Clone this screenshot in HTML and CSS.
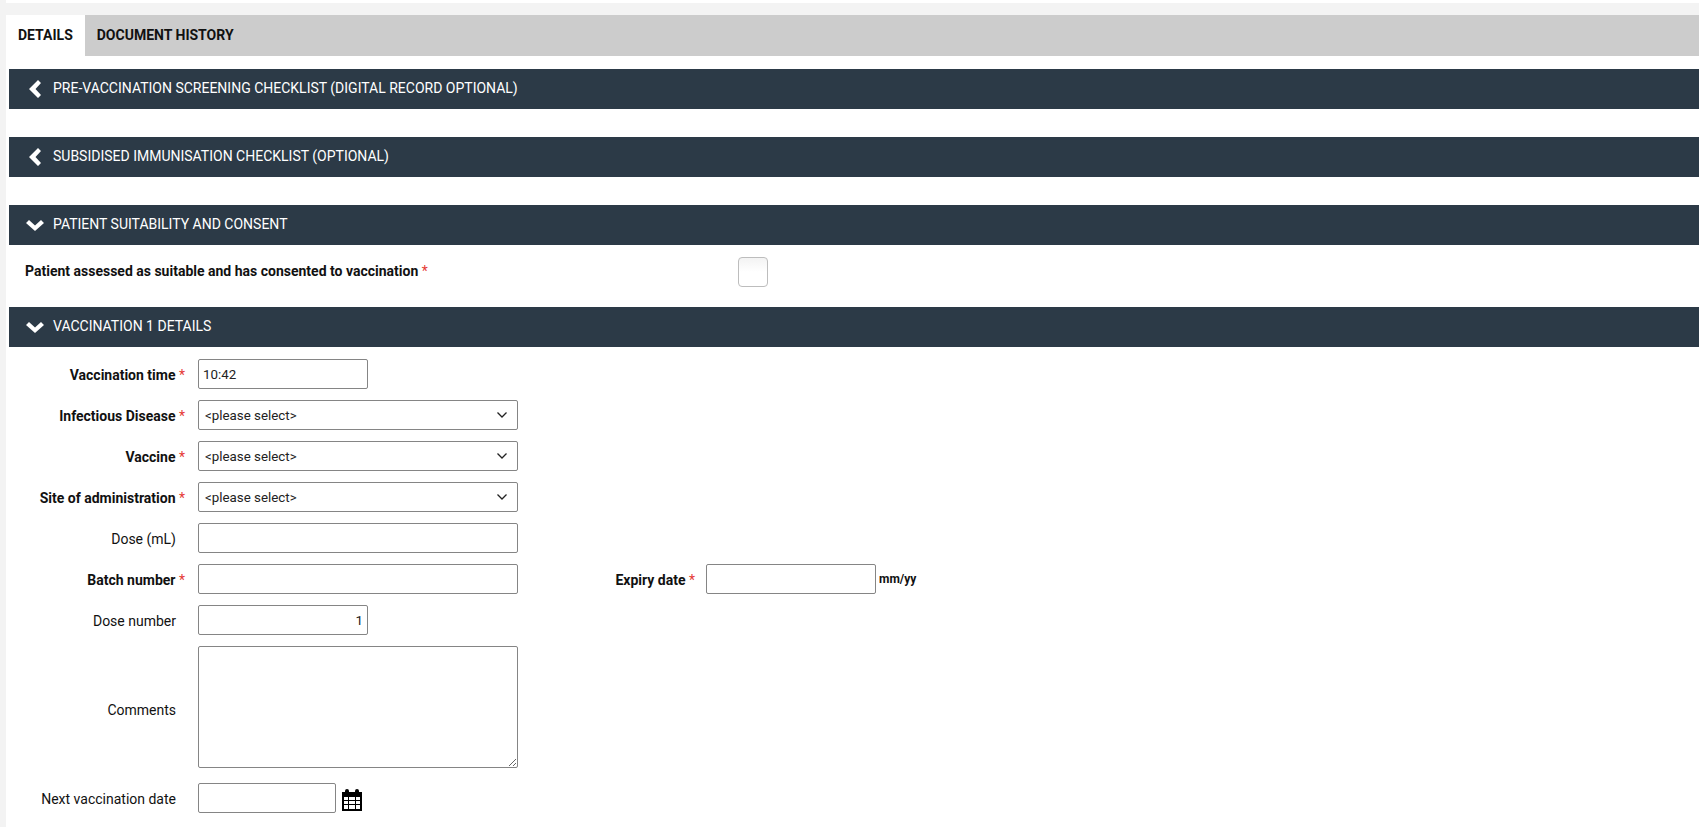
FILE: index.html
```html
<!DOCTYPE html>
<html lang="en">
<head>
<meta charset="utf-8">
<title>Vaccination record</title>
<link rel="stylesheet" href="styles.css">
</head>
<body>
<div class="page">
  <div class="top-strip"></div>
  <nav class="tabs">
    <a class="tab active">DETAILS</a>
    <a class="tab">DOCUMENT HISTORY</a>
  </nav>
  <main class="content">
    <section class="collapsed">
      <h2 class="bar"><span class="icon-slot"><svg class="chev-left" viewBox="0 0 12 18"><path d="M9 0 L12 3 L6.500 9 L12 15 L9 18 L0 9 Z"/></svg></span>PRE-VACCINATION SCREENING CHECKLIST (DIGITAL RECORD OPTIONAL)</h2>
    </section>
    <section class="collapsed">
      <h2 class="bar"><span class="icon-slot"><svg class="chev-left" viewBox="0 0 12 18"><path d="M9 0 L12 3 L6.500 9 L12 15 L9 18 L0 9 Z"/></svg></span>SUBSIDISED IMMUNISATION CHECKLIST (OPTIONAL)</h2>
    </section>
    <section>
      <h2 class="bar"><span class="icon-slot"><svg class="chev-down" viewBox="0 0 18 11"><path d="M3 0 L9 5.500 L15 0 L18 3 L9 11 L0 3 Z"/></svg></span>PATIENT SUITABILITY AND CONSENT</h2>
      <div class="consent">
        <span class="consent-label">Patient assessed as suitable and has consented to vaccination <span class="star">*</span></span>
        <span class="check"></span>
      </div>
    </section>
    <section>
      <h2 class="bar"><span class="icon-slot"><svg class="chev-down" viewBox="0 0 18 11"><path d="M3 0 L9 5.500 L15 0 L18 3 L9 11 L0 3 Z"/></svg></span>VACCINATION 1 DETAILS</h2>
      <div class="form">
        <div class="row">
          <label class="label req">Vaccination time <span class="star">*</span></label>
          <input class="field short" type="text" value="10:42">
        </div>
        <div class="row">
          <label class="label req">Infectious Disease <span class="star">*</span></label>
          <select class="field wide"><option>&lt;please select&gt;</option></select>
        </div>
        <div class="row">
          <label class="label req">Vaccine <span class="star">*</span></label>
          <select class="field wide"><option>&lt;please select&gt;</option></select>
        </div>
        <div class="row">
          <label class="label req">Site of administration <span class="star">*</span></label>
          <select class="field wide"><option>&lt;please select&gt;</option></select>
        </div>
        <div class="row">
          <label class="label">Dose (mL)</label>
          <input class="field wide" type="text">
        </div>
        <div class="row">
          <label class="label req">Batch number <span class="star">*</span></label>
          <input class="field wide" type="text">
          <label class="expiry-label">Expiry date <span class="star">*</span></label>
          <input class="field expiry" type="text">
          <span class="hint">mm/yy</span>
        </div>
        <div class="row">
          <label class="label">Dose number</label>
          <input class="field short num" type="text" value="1">
        </div>
        <div class="row">
          <label class="label">Comments</label>
          <textarea class="field wide notes"></textarea>
        </div>
        <div class="row">
          <label class="label">Next vaccination date</label>
          <input class="field date" type="text">
          <svg class="cal" viewBox="0 0 20 22">
            <path fill-rule="evenodd" d="M0 3H3V2Q3 0 5 0T7 2V3H13V2Q13 0 15 0T17 2V3H20V22H0ZM2 8V11H6V8ZM7 8V11H13V8ZM14 8V11H18V8ZM2 12V15H6V12ZM7 12V15H13V12ZM14 12V15H18V12ZM2 16V20H6V16ZM7 16V20H13V16ZM14 16V20H18V16Z"/>
          </svg>
        </div>
      </div>
    </section>
  </main>
</div>
</body>
</html>
```

FILE: styles.css
```css
html, body {
  margin: 0;
  height: 100%;
  overflow: hidden;
}
body {
  background: #f3f3f3;
  font-family: Roboto, "Liberation Sans", sans-serif;
  font-size: 14px;
  color: #111;
}
.page {
  padding-left: 6px;
  height: 100%;
  display: flex;
  flex-direction: column;
}
.top-strip {
  height: 3px;
  background: #fff;
  margin-bottom: 12px;
  flex: none;
}
.tabs {
  flex: none;
  display: flex;
  height: 41px;
  background: #cccccc;
}
.tab {
  display: flex;
  align-items: center;
  padding: 0 12px 2px;
  font-weight: 700;
  font-size: 14px;
  color: #111;
}
.tab.active {
  background: #fff;
}
.content {
  flex: 1;
  background: #fff;
  padding: 13px 0 0 3px;
}
.collapsed {
  margin-bottom: 28px;
}
.bar {
  display: flex;
  align-items: center;
  height: 40px;
  box-sizing: border-box;
  padding-bottom: 2px;
  margin: 0;
  background: #2c3a47;
  color: #fff;
  font-size: 14px;
  font-weight: 400;
}
.icon-slot {
  width: 44px;
  display: flex;
  align-items: center;
  flex: none;
  padding-top: 2px;
}
.chev-left {
  width: 12px;
  height: 18px;
  fill: #fff;
  margin-left: 20px;
}
.chev-down {
  width: 18px;
  height: 11px;
  fill: #fff;
  margin-left: 17px;
}
.consent {
  display: flex;
  align-items: center;
  height: 62px;
  padding: 0 0 8px 16px;
  box-sizing: border-box;
}
.consent-label {
  width: 713px;
  font-weight: 700;
  padding-bottom: 2px;
}
.star {
  color: #e53935;
  font-weight: 400;
}
.check {
  width: 30px;
  height: 30px;
  box-sizing: border-box;
  border: 1px solid #bdbdbd;
  border-radius: 4px;
  background: linear-gradient(#f3f3f3, #ffffff 50%);
}
.form {
  display: flex;
  flex-direction: column;
  gap: 11px;
  padding-top: 12px;
}
.row {
  display: flex;
  align-items: center;
}
.label {
  width: 189px;
  box-sizing: border-box;
  padding: 2px 22px 0 0;
  text-align: right;
  flex: none;
}
.label.req {
  padding-right: 13px;
  font-weight: 700;
}
.field {
  height: 30px;
  box-sizing: border-box;
  border: 1px solid #858585;
  border-radius: 2px;
  background: #fff;
  font-family: inherit;
  font-size: 13.333px;
  color: #222;
  padding: 0 4px;
  margin: 0;
  flex: none;
}
select.field {
  appearance: none;
  padding: 0 6px;
  background-image: url("data:image/svg+xml,%3Csvg xmlns='http://www.w3.org/2000/svg' width='10' height='6' viewBox='0 0 10 6'%3E%3Cpath d='M.5.5 5 5 9.500.5' fill='none' stroke='%23222' stroke-width='1.300'/%3E%3C/svg%3E");
  background-repeat: no-repeat;
  background-position: right 10px center;
}
.short {
  width: 170px;
}
.wide {
  width: 320px;
}
.date {
  width: 138px;
}
.expiry {
  width: 170px;
}
.num {
  text-align: right;
}
.notes {
  height: 122px;
  margin-bottom: 4px;
  resize: both;
}
.expiry-label {
  width: 188px;
  box-sizing: border-box;
  padding: 2px 11px 0 0;
  text-align: right;
  font-weight: 700;
}
.hint {
  margin-left: 3px;
  font-size: 12px;
  font-weight: 700;
}
.cal {
  width: 20px;
  height: 22px;
  margin: 3px 0 0 6px;
  fill: #000;
}
```
